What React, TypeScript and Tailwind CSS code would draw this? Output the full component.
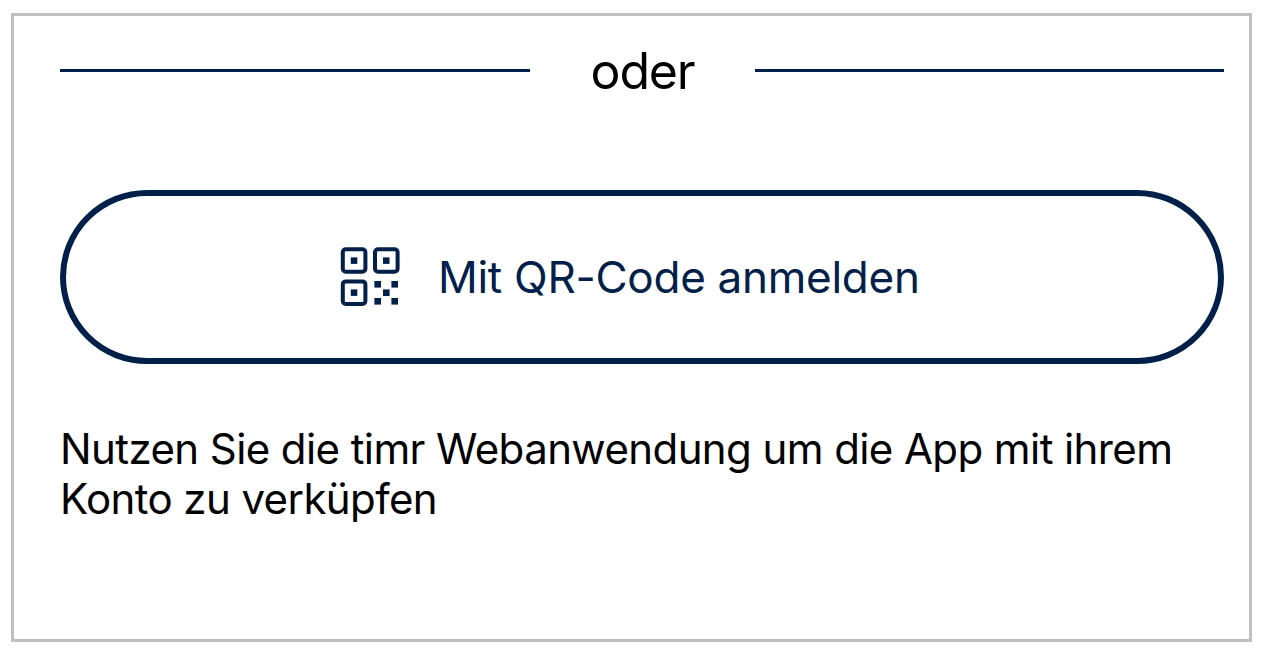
function QrCodeIcon() {
  return (
    <svg
      width="60"
      height="60"
      viewBox="0 0 60 60"
      fill="none"
      stroke="currentColor"
      strokeWidth="4"
      className="shrink-0"
    >
      {/* Finder squares */}
      <rect x="2.8" y="2.2" width="22.6" height="22.6" rx="3" />
      <rect x="35" y="2.2" width="22.6" height="22.6" rx="3" />
      <rect x="2.8" y="34.4" width="22.6" height="22.6" rx="3" />
      <g fill="currentColor" stroke="none">
        <rect x="10.8" y="10.4" width="6.5" height="6.5" />
        <rect x="43" y="10.4" width="6.5" height="6.5" />
        <rect x="10.8" y="42.4" width="6.5" height="6.5" />
        {/* Data modules */}
        <rect x="34.4" y="34" width="6.6" height="6.6" />
        <rect x="51.4" y="34" width="6.6" height="6.6" />
        <rect x="43" y="42.4" width="6.6" height="6.6" />
        <rect x="34.4" y="51" width="6.6" height="6.6" />
        <rect x="51.4" y="51" width="6.6" height="6.6" />
      </g>
    </svg>
  )
}

function Divider({ label }: { label: string }) {
  return (
    <div className="flex items-center h-[58px]">
      <div className="h-[3px] w-[470px] bg-[#00204a]" />
      <span className="flex-1 pt-0.5 text-center text-[50px] leading-[58px] tracking-[-1.2px]">{label}</span>
      <div className="h-[3px] w-[469px] bg-[#00204a]" />
    </div>
  )
}

export default function App() {
  return (
    <div className="h-[649px] bg-white pt-[13px] pl-[11px] font-['Inter',sans-serif] text-black">
      <div className="w-[1241px] h-[629px] border-[3px] border-[#bfbfbf] pt-[25px] pl-[46px] pr-[25px]">
        <Divider label="oder" />
        <button className="mt-[91px] flex h-[174px] w-full items-center rounded-full border-6 border-[#00204a] pl-[274px] text-[#00204a]">
          <QrCodeIcon />
          <span className="ml-[38px] whitespace-nowrap text-[44px] tracking-[-0.27px]">Mit QR-Code anmelden</span>
        </button>
        <p className="mt-[60px] whitespace-nowrap text-[42px] leading-[50px] tracking-[-0.59px]">
          Nutzen Sie die timr Webanwendung um die App mit ihrem
          <br />
          Konto zu verküpfen
        </p>
      </div>
    </div>
  )
}
